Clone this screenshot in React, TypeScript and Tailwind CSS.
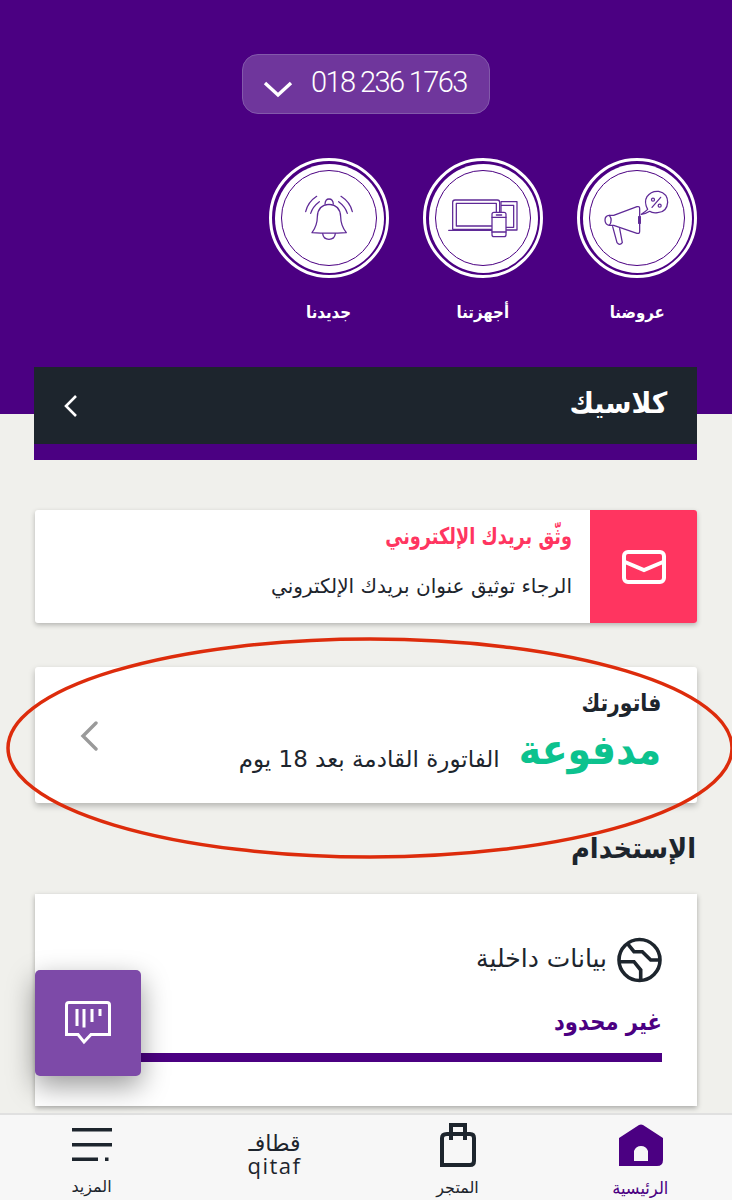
function Rings({ view, children }: { view: string; children: React.ReactNode }) {
  return (
    <div className="w-[120px] h-[120px] rounded-full border-[3px] border-white p-[2.5px]">
      <div className="w-full h-full rounded-full bg-white p-[6.5px]">
        <div className="relative w-full h-full rounded-full border-[1.5px] border-[#4b0082] bg-white">
          <svg className="absolute left-[-13.5px] top-[-13.5px]" width="120" height="120" viewBox={view} fill="none" stroke="#5f2a97" strokeWidth="3.8" strokeLinejoin="round" strokeLinecap="round">
            {children}
          </svg>
        </div>
      </div>
    </div>
  );
}

function Tile({ label, view, children }: { label: string; view: string; children: React.ReactNode }) {
  return (
    <div className="flex flex-col items-center w-[120px]">
      <Rings view={view}>{children}</Rings>
      <div className="mt-[22px] text-white text-[17px] font-bold leading-[24px] scale-x-[0.88]">{label}</div>
    </div>
  );
}

export default function App() {
  return (
    <div dir="rtl" className="relative w-[732px] h-[1200px] overflow-hidden bg-[#f0f0ec] flex flex-col text-[#1d252d]" style={{ fontFamily: '"DejaVu Sans", sans-serif' }}>
      <main className="flex-1 min-h-0 overflow-hidden">
        <header className="bg-[#4b0082] h-[414px] pt-[54px]">
          <div dir="ltr" className="mx-auto w-[248px] h-[60px] rounded-[16px] bg-[#6f369c] border border-[#8359ab] flex items-center pl-[20px] gap-[18px]">
            <svg width="30" height="18" viewBox="0 0 30 18" fill="none" stroke="white" strokeWidth="3.4" className="mt-[9px]"><path d="M2 3 L15 15 L28 3" /></svg>
            <span className="text-white text-[29px] font-light leading-none tracking-[-1.6px] mb-[4px]" style={{ fontFamily: 'Roboto, sans-serif' }}>018 236 1763</span>
          </div>
          <div className="mt-[44px] flex pr-[35px] gap-[34px]">
            <Tile label="عروضنا" view="50 24 360 360">
              <path d="M160 196 L230 170 Q238 168 238 176 L238 244 Q238 252 230 250 L160 226 L147 226 Q134 224 134 210 Q134 197 147 196 Z" />
              <path d="M147 196 Q158 210 147 226" />
              <rect x="235" y="200" width="5" height="20" fill="#5f2a97" />
              <path d="M157 230 L170 278 Q178 288 186 278 L178 236" />
              <path d="M243 193 Q256 184 262 178 Q250 156 260 140 Q272 122 295 124 Q322 130 322 157 Q320 186 292 188 Q276 190 268 184 Q256 192 243 193 Z" />
              <path d="M275 172 L301 142" />
              <circle cx="278" cy="149" r="4.5" />
              <circle cx="298" cy="167" r="4.5" />
            </Tile>
            <Tile label="أجهزتنا" view="38 24 360 360">
              <path d="M244 238 L127 238 L127 157 Q127 150 134 150 L261 150 Q268 150 268 157 L268 186" />
              <path d="M244 228 L138 228 L138 160 L258 160 L258 186" />
              <path d="M115 241 L244 241" />
              <path d="M272 155 L320 155 L320 240 L288 240 M272 186 L272 155 M275 166 L310 166 M288 232 L310 232 M310 166 L310 232" />
              <rect x="245" y="187" width="42" height="73" rx="6" fill="white" />
              <path d="M245 202 L287 202 M245 246 L287 246 M258 195 L274 195" />
            </Tile>
            <Tile label="جديدنا" view="27 24 360 360">
              <path d="M156 248 Q172 226 172 200 Q173 165 207 163 Q241 165 242 200 Q242 226 259 248 Q207 251 156 248 Z" />
              <path d="M195 162 Q196 147 207 147 Q219 147 220 162" />
              <path d="M188 251 Q190 268 207 268 Q224 268 226 251" />
              <path d="M137 185 Q144 156 170 139 M152 190 Q158 170 178 155 M277 185 Q270 156 243 139 M262 190 Q256 170 236 155" />
            </Tile>
          </div>
        </header>

        <section className="mx-[35px] w-[663px] -mt-[47px] relative">
          <div className="bg-[#1d252d] h-[77px] flex items-center justify-between pr-[30px] pl-[30px]">
            <span className="text-white text-[29px] font-bold mb-[3px] origin-right scale-x-[0.92]">كلاسيك</span>
            <svg width="14" height="24" viewBox="0 0 14 24" fill="none" stroke="white" strokeWidth="2.6"><path d="M12 2 L2 12 L12 22" /></svg>
          </div>
          <div className="bg-[#4b0082] h-[16px]" />
        </section>

        <div className="mx-[35px] w-[662px] mt-[50px] h-[113px] bg-white rounded-[3px] shadow-[0_2px_5px_rgba(0,0,0,0.25)] flex overflow-hidden">
          <div className="w-[107px] bg-[#ff3560] flex items-center justify-center">
            <svg width="44" height="34" viewBox="0 0 44 34" fill="none" stroke="white" strokeWidth="4">
              <rect x="2" y="2" width="40" height="30" rx="4" />
              <path d="M3 12 L22 20 L41 12" />
            </svg>
          </div>
          <div className="flex-1 pr-[18px] pt-[11px]">
            <div className="text-[#ff3560] text-[23px] font-bold leading-[30px] origin-right scale-x-[0.77]">وثّق بريدك الإلكتروني</div>
            <div className="mt-[20px] text-[20px] leading-[30px]">الرجاء توثيق عنوان بريدك الإلكتروني</div>
          </div>
        </div>

        <div className="mx-[35px] w-[662px] mt-[44px] h-[136px] bg-white rounded-[3px] shadow-[0_3px_6px_rgba(0,0,0,0.25)] flex justify-between pr-[36px] pl-[45px] pt-[20px]">
          <div>
            <div className="text-[24px] font-bold leading-[32px] origin-right scale-x-[0.85]">فاتورتك</div>
            <div className="flex items-center gap-[3px] mt-[5px]">
              <span className="text-[#0cc28e] text-[42px] font-bold leading-[46px] origin-right scale-x-[0.9]">مدفوعة</span>
              <span className="text-[23px] mt-[18px]">الفاتورة القادمة بعد 18 يوم</span>
            </div>
          </div>
          <svg width="18" height="30" viewBox="0 0 18 30" fill="none" stroke="#9a9a9a" strokeWidth="3.4" strokeLinecap="round" className="mt-[34px]"><path d="M16 2 L3 15 L16 28" /></svg>
        </div>

        <h2 className="mx-[36px] mt-[26px] text-[28px] font-bold leading-[40px] origin-right scale-x-[0.92]">الإستخدام</h2>

        <div className="mx-[35px] w-[662px] mt-[25px] h-[212px] bg-white shadow-[0_2px_5px_rgba(0,0,0,0.3)] px-[35px] pt-[43px]">
          <div className="flex items-center gap-[10px]">
            <svg width="45" height="46" viewBox="0 0 45 46" fill="none" stroke="#1d252d" strokeWidth="3.6">
              <circle cx="22.5" cy="23" r="20.5" />
              <path d="M10.3 6.3 L17 14.7 L25.3 14.7 L33.7 23 L43.7 23 M2 24.7 L17 24.7 L23.7 33 L23.7 43" />
            </svg>
            <span className="text-[25px] leading-[32px] -mt-[2px]">بيانات داخلية</span>
          </div>
          <div className="mt-[23px] text-[#4b0082] text-[24px] font-bold leading-[32px] origin-right scale-x-[0.88]">غير محدود</div>
          <div className="mt-[15px] h-[9px] bg-[#4b0082]" />
        </div>
      </main>

      <nav className="h-[87px] shrink-0 bg-[#f7f7f7] border-t-2 border-[#e0e0e0] grid grid-cols-4 relative">
        <div className="flex flex-col items-center pt-[9px]">
          <svg width="44" height="42" viewBox="0 0 44 42" fill="#4b0082">
            <path fillRule="evenodd" d="M20 1 Q22 0 24 1 L44 14 V36 Q44 42 38 42 H0 V14 Z M15 37 H29 V27 Q27 22 22 22 Q17 22 15 27 Z" />
          </svg>
          <span className="text-[#4b0082] text-[17px] leading-[24px] mt-[10px] scale-x-[0.96]">الرئيسية</span>
        </div>
        <div className="flex flex-col items-center pt-[8px]">
          <svg width="36" height="44" viewBox="0 0 36 44" fill="none" stroke="#1d252d" strokeWidth="4">
            <path d="M7 11 H30 Q34 11 34 15 V38 Q34 42 30 42 H2 V15 Q2 11 7 11 Z" />
            <path d="M11 17 V2 H25 V17" />
          </svg>
          <span className="text-[16px] leading-[24px] mt-[9px]">المتجر</span>
        </div>
        <div className="flex flex-col items-center pt-[18px] text-[#1d252d]">
          <span className="text-[22px] leading-[22px]">قطافـ</span>
          <span className="text-[22px] leading-[20px] tracking-[1.5px]" style={{ fontFamily: '"Open Sans", sans-serif' }}>qitaf</span>
        </div>
        <div className="flex flex-col items-center pt-[13px]">
          <svg width="40" height="33" viewBox="0 0 40 33" fill="#1d252d">
            <rect x="0" y="0" width="40" height="3.5" />
            <rect x="0" y="15" width="40" height="3.5" />
            <rect x="0" y="29.5" width="26" height="3.5" />
            <rect x="33" y="29.5" width="3.5" height="3.5" />
          </svg>
          <span className="text-[16px] leading-[24px] mt-[14px]">المزيد</span>
        </div>
      </nav>

      <div className="absolute left-[35px] top-[970px] w-[106px] h-[106px] rounded-[5px] bg-[#7d4aa8] shadow-[0_10px_28px_rgba(0,0,0,0.4)] flex items-center justify-center">
        <svg width="46" height="44" viewBox="0 0 46 44" fill="none" stroke="white" strokeWidth="3">
          <path d="M4 1.5 H42 Q44.5 1.5 44.5 4 V33.5 H26 L19 41 L13 33.5 H1.5 V4 Q1.5 1.5 4 1.5 Z" />
          <path d="M12 8 V25 M19 8 V26.5 M27 8 V21 M35 8 V15" />
        </svg>
      </div>

      <svg className="absolute left-0 top-0 pointer-events-none" width="732" height="1200" fill="none">
        <ellipse cx="370" cy="748" rx="362" ry="109" stroke="#dd2c0c" strokeWidth="3.5" />
      </svg>
    </div>
  );
}
